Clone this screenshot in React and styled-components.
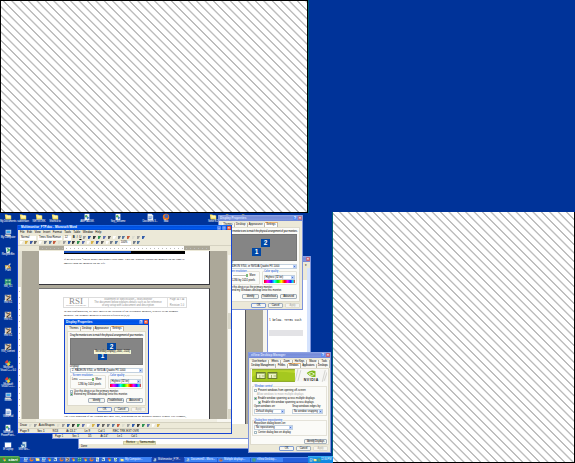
import React from "react";
import styled, { createGlobalStyle, css } from "styled-components";

const Global = createGlobalStyle`
  * { box-sizing: border-box; }
  body { margin: 0; overflow: hidden; background: #003399; }
`;

const sans = `"Liberation Sans", Arial, sans-serif`;
const serif = `"Liberation Serif", "Times New Roman", serif`;

const Screen = styled.main`
  position: relative;
  width: 575px;
  height: 463px;
  overflow: hidden;
  background: #003399;
  font: 2.6px/3px ${sans};
  color: #000;
  white-space: nowrap;
`;

const place = css`
  position: absolute;
  left: ${(p) => p.$x}px;
  top: ${(p) => p.$y}px;
  width: ${(p) => p.$w}px;
  height: ${(p) => p.$h}px;
`;

const Hatch = styled.div`
  ${place}
  background: repeating-linear-gradient(45deg,
    #fff 0 ${(p) => p.$phase - 1}px,
    #bdbdbd ${(p) => p.$phase - 0.4}px ${(p) => p.$phase + 0.4}px,
    #fff ${(p) => p.$phase + 1}px 5.94px);
  border: solid #000;
  border-width: ${(p) => p.$edges};
  box-shadow: ${(p) => p.$shadow};
`;

const Win = styled.section`
  ${place}
  display: flex;
  flex-direction: column;
  overflow: hidden;
  background: ${(p) => p.$bg || "#ece9d8"};
  border: 1px solid ${(p) => (p.$active ? "#1745d2" : "#8095dc")};
  border-top: 0;
`;

const Title = styled.header`
  flex: none;
  display: flex;
  align-items: center;
  height: ${(p) => p.$h || 6}px;
  margin: 0 -1px;
  padding: 0 1px 0 ${(p) => p.$pad ?? 2}px;
  gap: 1px;
  background: ${(p) =>
    p.$active
      ? "linear-gradient(#2878f5, #0050df 30%, #005af0 75%, #0042c4)"
      : "linear-gradient(#95a9e6, #768bd8 35%, #7f96df 80%, #6d80cf)"};
  color: ${(p) => (p.$active ? "#fff" : "#dce5ff")};
  font: bold 3px/5px ${sans};
`;

const Spacer = styled.span`flex: 1;`;

const Cap = styled.i`
  width: 4px;
  height: 4px;
  border-radius: 1px;
  background: ${(p) => p.$c || "#5b8cf5"};
  color: #fff;
  font: bold 4px/4px ${sans};
  text-align: center;
`;

const Sheet = styled.div`
  flex: 1;
  min-height: 0;
  display: flex;
  flex-direction: column;
  margin: ${(p) => p.$m || "0 2px"};
  padding: ${(p) => p.$p || "0 3px"};
  background: #fbfbf8;
  border: 1px solid #dedbcd;
`;

const Tabs = styled.div`
  display: flex;
  align-items: flex-end;
  flex: none;
  height: ${(p) => p.$h || 5}px;
  margin-left: ${(p) => p.$x ?? 3}px;
  letter-spacing: ${(p) => p.$track || 0}px;
`;

const Tab = styled.span`
  height: 4px;
  padding: 0 1.2px;
  line-height: 4px;
  border-right: 1px solid #bcb9ac;
  background: #f8f7f2;
  ${(p) => p.$on && "height: 5px; background: #fff; border-top: 1px solid #f4b873;"}
  ${(p) => p.$grow && "flex: 1 0 auto; text-align: center; padding: 0;"}
`;

const Line = styled.p`
  margin: 0;
  flex: none;
  height: ${(p) => p.$h || 4}px;
  padding-left: ${(p) => p.$in || 0}px;
  display: flex;
  align-items: center;
  gap: 1px;
  color: ${(p) => p.$c || "#000"};
  letter-spacing: ${(p) => p.$track || 0}px;
`;

const Arrangement = styled.div`
  position: relative;
  height: 27px;
  flex: none;
  background: #858585;
  border: 1px solid #777;
`;

const Monitor = styled.b`
  ${place}
  background: #0047a5;
  color: #fff;
  font: bold 6.5px/8px ${sans};
  text-align: center;
`;

const Tip = styled.span`
  ${place}
  background: #f6f5d5;
  letter-spacing: -0.13px;
  line-height: 4px;
  text-align: center;
`;

const Select = styled.div`
  flex: none;
  display: flex;
  justify-content: space-between;
  align-items: center;
  height: 5px;
  width: ${(p) => p.$w || "auto"};
  padding-left: 1px;
  border: 1px solid #c3d1de;
  background: #fff;
  &::after {
    content: "";
    width: 3px;
    height: 3px;
    background: radial-gradient(#5477bb 25%, #b5ccfa 45%);
  }
`;

const Row = styled.div`
  display: flex;
  align-items: center;
  flex: none;
  justify-content: ${(p) => p.$j || "flex-start"};
  gap: ${(p) => p.$gap ?? 2}px;
  height: ${(p) => p.$h}px;
  padding: ${(p) => p.$p || 0};
`;

const Group = styled.div`
  flex: 1;
  height: 14px;
  padding: 1px 1px 0;
  border: 1px solid #e4e2d9;
  border-radius: 1px;
`;

const Legend = styled.b`
  display: block;
  width: max-content;
  height: 3px;
  margin-top: -3px;
  padding: 0 0.5px;
  background: #fbfbf8;
  color: #0046d5;
  font-weight: normal;
`;

const Slider = styled.i`
  width: 15px;
  height: 3px;
  border-right: 2px solid #7cba7c;
  background: linear-gradient(#fff 1px, #bdbdb5 1px 2px, #fff 2px);
`;

const Spectrum = styled.div`
  height: 3px;
  background: linear-gradient(90deg, red, #f0f 12%, #22f 24%, #0ff 34%, #0e0 45%, #ff0 56%, red 67%, #f0f 76%, #22f 86%, #0ee 93%, #f22);
`;

const Check = styled.i`
  width: 3px;
  height: 3px;
  border: 1px solid #a5b9c2;
  background: ${(p) => (p.$on ? "#38a838" : "#fff")};
`;

const Button = styled.span`
  width: ${(p) => p.$w || 17}px;
  height: 5px;
  border: 1px solid ${(p) => (p.$off ? "#dddbd0" : p.$focus ? "#7f9bd0" : "#a5b1bc")};
  border-radius: 1px;
  background: #f6f5f0;
  color: ${(p) => (p.$off ? "#aaa99c" : "#000")};
  text-align: center;
  letter-spacing: -0.1px;
  line-height: 3px;
`;

function DisplayProperties({ x, y, active }) {
  return (
    <Win $x={x} $y={y} $w={85} $h={95} $active={active}>
      <Title $active={active}>Display Properties<Spacer /><Cap>?</Cap><Cap $c={active ? "#eb5430" : "#c06e86"}>×</Cap></Title>
      <Tabs $h={6}>
        <Tab>Themes</Tab><Tab>Desktop</Tab><Tab>Appearance</Tab><Tab $on>Settings</Tab>
      </Tabs>
      <Sheet $p="0 2px">
        <Line $h={6} $track={-0.18}>Drag the monitor icons to match the physical arrangement of your monitors.</Line>
        <Arrangement>
          <Monitor $x={36} $y={4} $w={9} $h={8}>2</Monitor>
          <Monitor $x={27} $y={13} $w={9} $h={8}>1</Monitor>
          {active && <Tip $x={23} $y={11} $w={37} $h={4}>Secondary Display (-1600, -1024)</Tip>}
        </Arrangement>
        <Line $h={3}>Display:</Line>
        <Select>2. RADEON 9700, or NVIDIA Quadro FX 1000</Select>
        <Row $h={16} $p="2px 0 0">
          <Group>
            <Legend>Screen resolution</Legend>
            <Row $h={4} $gap={1.5}>Less<Slider />More</Row>
            <Line $in={6} $h={6}>1280 by 1024 pixels</Line>
          </Group>
          <Group>
            <Legend>Color quality</Legend>
            <Row $h={2} />
            <Select>Highest (32 bit)</Select>
            <Spectrum />
          </Group>
        </Row>
        <Line $h={4}><Check />Use this device as the primary monitor.</Line>
        <Line $h={3}><Check $on />Extend my Windows desktop onto this monitor.</Line>
        <Row $h={7} $j="flex-end" $p="2px 0 0"><Button>Identify</Button><Button>Troubleshoot...</Button><Button>Advanced</Button></Row>
      </Sheet>
      <Row $h={7} $j="flex-end" $p="0 2px"><Button $w={15} $focus>OK</Button><Button $w={15}>Cancel</Button><Button $w={15} $off>Apply</Button></Row>
    </Win>
  );
}

const MenuBar = styled.div`
  flex: none;
  display: flex;
  align-items: center;
  gap: ${(p) => p.$gap || 2.4}px;
  height: ${(p) => p.$h || 5}px;
  padding: 0 2px;
  background: #ece9d8;
  font-size: 2.9px;
  border-bottom: ${(p) => (p.$line ? "1px solid #d5d2c1" : "0")};
`;

const Tool = styled.i`
  width: 3px;
  height: 3px;
  background: linear-gradient(120deg, ${(p) => p.$c} 55%, #ece9d8 75%);
`;

const toolColors = ["#fff", "#d7b34b", "#405ca5", "#646464", "#fff", "#747d89", "#5878a0", "#c65b3e", "#dcdccf", "#9b9b9b", "#325dab", "#3a3a3a", "#2d9151", "#6272ae"];
const Tools = ({ n, from = 0 }) => Array.from({ length: n }, (_, i) => <Tool key={i} $c={toolColors[(i + from) % toolColors.length]} />);

const Field = styled.span`
  width: ${(p) => p.$w}px;
  height: 4px;
  background: #fff;
  font-size: 2.6px;
  line-height: 4px;
  padding-left: 1px;
`;

const DocArea = styled.div`
  flex: 1;
  display: flex;
  min-height: 0;
`;

const VRuler = styled.div`
  width: 4px;
  background: repeating-linear-gradient(#fff 0 4px, #bbb 4px 5px, #fff 5px 6px) 1px 0 / 1px 100% no-repeat, #fbfaf5;
  border-right: 1px solid #d5d2c1;
  border-top: 36px solid #e3e1d3;
`;

const Canvas = styled.div`
  flex: 1;
  padding: 0 17px;
  background: #aca899;
`;

const Page = styled.article`
  height: ${(p) => p.$h}px;
  margin-bottom: 3px;
  padding: ${(p) => p.$top || 0}px 0 0 25px;
  background: #fff;
  border-right: 1px solid #36363c;
  border-bottom: 1px solid #36363c;
  border-top: ${(p) => (p.$first ? 0 : "1px solid #777")};
  font: 2.9px/4px ${serif};
  overflow: hidden;
`;

const Figure = styled.div`
  width: 121px;
  height: 3px;
  margin-bottom: 3px;
  background: linear-gradient(90deg, #164db8 67px, #000 67px);
  border-bottom: 1px solid #000;
`;

const Letterhead = styled.div`
  display: grid;
  grid-template-columns: 25px 79px 19px;
  height: 11px;
  width: 124px;
  margin: 0 0 1px -1px;
  border: 1px solid #dcdcdc;
  color: #8c8c8c;
  text-align: center;
  overflow: hidden;
  & > * { border-right: 1px solid #e2e2e2; }
`;

const Logo = styled.b`
  font: 9px/7px ${serif};
  color: #8c8c8c;
  small { display: block; font: 2.5px/2px ${serif}; letter-spacing: -0.1px; }
`;

const HeadText = styled.span`
  font: 2.6px/3px ${sans};
`;

const ScrollV = styled.div`
  width: 4px;
  background: linear-gradient(#ece9d8 4px, #f7f6f0 4px 62px, #dad8ca 62px 78px, #f7f6f0 78px 158px, #d9d6c6 158px);
  border-left: 1px solid #e0ddce;
`;

const Ruler = styled.div`
  flex: none;
  height: 5px;
  margin: 0 21px;
  background: repeating-linear-gradient(90deg, transparent 0 3px, #bbb 3px 4px) 0 2px / 100% 1px no-repeat,
    linear-gradient(90deg, #aca899 25px, #fff 25px 145px, #aca899 145px);
  border-bottom: 1px solid #ece9d8;
`;

const HScroll = styled.div`
  flex: none;
  height: 4px;
  background: linear-gradient(90deg, #ece9d8 18px, #f0eee2 18px 199px, #f8f7f1 199px);
  border-bottom: 1px solid #d5d2c1;
`;

const Gap = styled.div`height: ${(p) => p.$h}px;`;

function WordWindow() {
  return (
    <Win $x={17} $y={225} $w={215} $h={209} $active>
      <Title $active $h={5} $pad={4}>Multimonitor_FTP.doc - Microsoft Word<Spacer /><Cap>-</Cap><Cap>▫</Cap><Cap $c="#eb5430">×</Cap></Title>
      <MenuBar>{"File Edit View Insert Format Tools Table Window Help".split(" ").map((m) => <span key={m}>{m}</span>)}</MenuBar>
      <MenuBar $gap={1.9}><Field $w={16}>Normal</Field><Field $w={24}>Times New Roman</Field><Field $w={7}>12</Field><b>B</b><i>I</i><u>U</u><Tools n={5} from={9} /><Tools n={8} from={3} /></MenuBar>
      <MenuBar $gap={1.75} $line $h={6}><Tools n={21} /><Field $w={11}>100%</Field><Tools n={2} from={5} /></MenuBar>
      <Ruler />
      <DocArea>
        <VRuler />
        <Canvas>
          <Page $h={34} $first>
            <Figure />
            <div>If needed click “check point” and gather error right. This one window toward the monitor on the right is</div>
            <div>smaller than the monitor on the left.</div>
          </Page>
          <Page $h={150} $top={8}>
            <Letterhead>
              <Logo>RSI<small>Resource Systems Inc</small></Logo>
              <HeadText><div>Statement of Specification – Multi-Monitor</div><div>The document below explains details such as for reference</div><div>of any setup with a document and description</div></HeadText>
              <HeadText><div>Page <b>11 / 15</b></div><div>&nbsp;</div><div>Revision 1.0</div></HeadText>
            </Letterhead>
            <div>In this configuration, we have moved the location of the secondary monitor, relative to the primary</div>
            <div>monitor. The primary monitor is always referred as (0,0).</div>
            <Gap $h={97} />
            <div>The exact handling of the cloning mec may vary, depending on the graphics adapter vendor. For example,</div>
            <div>in the behaviour presented, the nVidia display adapter allows you to control whether or not an</div>
          </Page>
        </Canvas>
        <ScrollV />
      </DocArea>
      <HScroll />
      <MenuBar $gap={2} $line $h={6}><span>Draw</span><Tools n={2} from={8} /><span>AutoShapes</span><Tools n={10} from={8} /><Tools n={11} from={5} /></MenuBar>
      <MenuBar $h={4} $gap={8}><span>Page 9</span><span>Sec 1</span><span>9/13</span><span>At 13.1"</span><span>Ln 9</span><span>Col 1</span><span>REC TRK EXT OVR</span></MenuBar>
    </Win>
  );
}

const Strip = styled.div`
  ${place}
  background: ${(p) => p.$bg};
`;

const StatusWindow = styled.div`
  ${place}
  background: ${(p) => p.$bg || "#ece9d8"};
  border: solid #7b91d8;
  border-width: 0 0 1px 1px;
  display: flex;
  align-items: flex-end;
  gap: 9px;
  padding-left: 2px;
`;

const Mini = styled.span`
  ${place}
  background: #ece8ba;
  border: 1px solid #cfcca8;
  line-height: 2px;
  text-align: center;
`;

const BrowserBody = styled.div`
  flex: 1;
  padding: 50px 0 0 38px;
  border-right: 3px solid #d5e3fd;
  background: linear-gradient(#ece9d8 12px, #fff 12px);
  font: 2.85px/5px "Liberation Mono", monospace;
`;

const GreyField = styled.div`
  height: 6px;
  width: 34px;
  margin-top: 7px;
  background: #e3e3e6;
`;

const Banner = styled.div`
  display: flex;
  flex: none;
  height: 13px;
  background: #fff;
  svg { display: block; }
`;

const Fieldset = styled.div`
  flex: none;
  height: ${(p) => p.$h}px;
  margin-top: 4px;
  padding: 1px 1px 0;
  border: 1px solid #e4e2d9;
`;

function NvidiaWindow() {
  return (
    <Win $x={248} $y={352} $w={83} $h={101}>
      <Title $pad={3}>nView Desktop Manager<Spacer /><Cap>?</Cap><Cap $c="#c45f73">×</Cap></Title>
      <Row $h={1.5} />
      <Tabs $x={1} $track={-0.15} $h={4}>{["User Interface", "Effects", "Zoom", "Hot Keys", "Mouse", "Tools"].map((t) => <Tab $grow key={t}>{t}</Tab>)}</Tabs>
      <Tabs $x={1} $track={-0.15} $h={4.5}>{["Desktop Management", "Profiles", "Windows", "Applications", "Desktops"].map((t) => <Tab $grow key={t} $on={t === "Windows"}>{t}</Tab>)}</Tabs>
      <Sheet $p="0 1px" $m="0 1px">
        <Banner>
          <svg width="44" height="13" viewBox="0 0 44 13">
            <path d="M0 0H44V13H0Z" fill="#b8d52b" /><path d="M0 8Q14 0 44 4V13H0Z" fill="#a5c81f" /><path d="M0 .5H44M0 12.5H44" stroke="#8aa52b" />
            <rect x="4.5" y="3.5" width="9" height="6" fill="#f3f7cd" stroke="#61732d" /><rect x="16.5" y="3.5" width="9" height="6" fill="#f3f7cd" stroke="#61732d" />
            <path d="M5 4.5H13M17 4.5H25M8 6V9M20 6V9M10 7H13M22 7H25" stroke="#8ca649" strokeWidth=".8" />
          </svg>
          <svg width="33" height="13" viewBox="0 0 33 13">
            <path d="M0 0H33V13H0Z" fill="#f6f6f4" /><path d="M3 0L0 12M31 1L28 13M6 1L3 12M33 3L30 12" stroke="#d2d2ce" />
            <path d="M12 4Q16 0 21 2V8Q16 9 12 4Z" fill="#80b818" /><path d="M14 4.5Q17 2 20 5Q17 8 14 4.5" fill="none" stroke="#fff" strokeWidth=".8" />
            <text x="9" y="12" fontFamily="Liberation Sans" fontSize="3.6" fontWeight="bold" textLength="15" fill="#222">NVIDIA</text>
          </svg>
        </Banner>
        <Fieldset $h={30}>
          <Legend>Window control</Legend>
          <Line $h={4}><Check />Prevent windows from opening off-screen</Line>
          <Line $h={4} $in={3} $c="#aaa">Allow windows to move multiple displays</Line>
          <Line $h={4}><Check $on />Enable window spanning across multiple displays</Line>
          <Line $h={4} $in={4}><Check $on />Enable title window spanning across displays</Line>
          <Row $h={5} $gap={17}><span>Open windows on:</span><span>Snap windows edges by:</span></Row>
          <Row $h={5} $gap={7}><Select $w="31px">Default display</Select><Select $w="31px">No window snapping</Select></Row>
        </Fieldset>
        <Fieldset $h={16}>
          <Legend>Dialog box repositioning</Legend>
          <Line $h={3}>Reposition dialog boxes on:</Line>
          <Select $w="39px">No repositioning</Select>
          <Line $h={5}><Check />Center dialog box on display</Line>
        </Fieldset>
        <Row $h={8} $j="flex-end" $p="2px 0 0"><Button $w={23}>Identify Displays</Button></Row>
      </Sheet>
      <Row $h={7} $j="flex-end" $p="0 2px"><Button $w={15} $focus>OK</Button><Button $w={15}>Cancel</Button><Button $w={15} $off>Apply</Button></Row>
    </Win>
  );
}

const art = {
  folder: <><path d="M1 2H4L5 3H9V8H2Z" fill="#f6df65" /><path d="M3 3H8V6H3Z" fill="#fff6b0" /></>,
  pc: <><path d="M2 1H9V6H2Z" fill="#ccd8e6" /><path d="M3 2H8V5H3Z" fill="#3ba5e9" /><path d="M1 7H8L9 9H2Z" fill="#ded9c8" /></>,
  bin: <><path d="M2 2H8L7 9H3Z" fill="#dcebe9" /><path d="M4 3L7 5L4 7" fill="none" stroke="#28a15b" strokeWidth="1.5" /></>,
  brush: <><path d="M1 4H7L9 8H2Z" fill="#e7c450" /><path d="M2 8L8 2" stroke="#ddd" strokeWidth="1.6" /><path d="M5 4L7 7" stroke="#b14520" /></>,
  green: <><path d="M1 1H9V9H1Z" fill="#339b72" /><path d="M2 3H8M3 7H8" stroke="#c4ebcc" /><path d="M5 1V9" stroke="#185c85" /></>,
  pen: <><path d="M1 1H9V9H1Z" fill="#d5d1c7" /><path d="M2 2L8 4L3 8L9 8" fill="none" stroke="#353333" strokeWidth="1.2" /><path d="M3 7L8 1" stroke="#cf7e2f" /></>,
  color: <><path d="M1 4L4 1L6 4L3 6Z" fill="#e14135" /><path d="M6 2L9 4L6 6Z" fill="#4bad4b" /><path d="M3 6L6 4L8 7L5 9Z" fill="#f2cf36" /><path d="M1 6L4 5L4 8Z" fill="#449ce3" /></>,
  doc: <><path d="M2 1H7L9 3V9H2Z" fill="#e7edf5" /><path d="M3 5H8M3 7H7" stroke="#4b78c2" /></>,
  word: <><path d="M3 1H8V8H3Z" fill="#c5dce6" /><path d="M1 4H6V9H1Z" fill="#3b78ae" /><path d="M2 5L3 8L4 6L5 8" stroke="#fff" fill="none" /></>,
  media: <><path d="M2 1H8V9H2Z" fill="#eff1f2" /><circle cx="4" cy="4" r="1.5" fill="#51ad5c" /><path d="M5 4L8 6L5 8Z" fill="#3b82d4" /></>,
  fire: <><circle cx="5" cy="5" r="4" fill="#e97624" /><circle cx="5.5" cy="4" r="2.3" fill="#4567bb" /></>,
  screen: <><path d="M1 2H9V8H1Z" fill="#fff" /><path d="M1 2H9" stroke="#76aae0" /></>,
};

const Shortcut = styled.div`
  ${place}
  display: flex;
  flex-direction: column;
  align-items: center;
  color: #fff;
  font: 2.7px/2.8px ${sans};
  letter-spacing: -0.14px;
  text-align: center;
  white-space: pre;
  svg { flex: none; width: 8px; height: 8px; }
`;

const shortcuts = [
  ["folder", "My Documents"], ["pc", "My Computer"], ["bin", "Recycle Bin"], ["brush", "Paint"], ["green", "SSI_3.1"],
  ["pen", "RSI 5.1"], ["pen", "RSI 5.1"], ["pen", "RSI 5.1"], ["pen", "RSI_Current"], ["color", "Microsoft\nVisual C++ 6.0"],
  ["color", "Microsoft\nVisual C++..."], ["pc", "Mobile"], ["doc", "WordPad"], ["media", "Microsoft\nPowerPoint..."], ["screen", "IE Laptop"],
].map(([k, t], i) => [k, t, 8, 213 + i * 16.25]).concat([
  ["folder", "subversion", 23, 213], ["folder", "NETWORK", 39, 213], ["folder", "Shortcut to", 55, 213], ["media", "AMFTA.LNK", 87, 213],
  ["media", "Sep_oct.wmv", 118, 213], ["doc", "Document 3...", 150, 213], ["fire", "Max", 166, 213], ["folder", "Steve 8.2", 213, 213],
  ["folder", "", 229, 213], ["folder", "", 245, 213], ["word", "MW files...", 24, 440.5],
]);

const Taskbar = styled.footer`
  ${place}
  display: flex;
  align-items: center;
  background: linear-gradient(#73a3f7, #245fdc 20%, #245fdc 80%, #1941a5);
  color: #fff;
  font: 2.6px/4px ${sans};
`;

const Start = styled.b`
  flex: none;
  width: 20px;
  height: 7px;
  padding-left: 2px;
  border-radius: 0 2px 2px 0;
  background: linear-gradient(#6dbb68, #36913a 30%, #36893a);
  font: italic bold 4.4px/7px ${sans};
  svg { width: 5px; height: 5px; vertical-align: -1px; }
`;

const Quick = styled.span`
  flex: none;
  display: flex;
  gap: 1px;
  width: 99px;
  padding-left: 3px;
  svg { width: 5px; height: 5px; }
`;

const Task = styled.span`
  flex: none;
  display: flex;
  align-items: center;
  gap: 1px;
  width: 32px;
  height: 5px;
  margin-right: 1px;
  padding-left: 1px;
  overflow: hidden;
  background: ${(p) => (p.$on ? "#183fa8" : "#3d83f5")};
  svg { width: 4px; height: 4px; }
`;

const Tray = styled.span`
  flex: none;
  width: 25px;
  height: 7px;
  padding-left: 1px;
  display: flex;
  align-items: center;
  letter-spacing: -0.1px;
  background: linear-gradient(#47b8f5, #1290e9 25%, #0f86df);
  svg { width: 4px; height: 4px; }
`;

const Icon = ({ kind }) => <svg viewBox="0 0 10 10">{art[kind]}</svg>;

export default function App() {
  return (
    <Screen>
      <Global />
      <Hatch $x={0} $y={0} $w={308} $h={213} $phase={2.5} $edges="1px" $shadow="1px 0 #006176" />
      <Hatch $x={333} $y={212} $w={242} $h={251} $phase={3.4} $edges="0 1px 1px 0" $shadow="-1px 0 #006176" />

      {shortcuts.map(([kind, label, x, y], i) => (
        <Shortcut key={i} $x={x - 8} $y={y} $w={16} $h={14}><Icon kind={kind} />{label}</Shortcut>
      ))}

      <Win $x={230} $y={256} $w={81} $h={182}>
        <Title><Spacer /><Cap $c="#c45f73">×</Cap></Title>
        <Row $h={6} $j="flex-end" $p="0 3px">▾</Row>
        <BrowserBody>l below. Terms such<GreyField /></BrowserBody>
      </Win>
      <StatusWindow $x={78} $y={430} $w={173} $h={19} $bg="linear-gradient(#fff 14px, #ece9d8 14px)"><span>Done</span></StatusWindow>
      <Mini $x={123} $y={441} $w={15} $h={4}>Etvrtice</Mini>
      <Mini $x={138} $y={441} $w={18} $h={4}>Yanma mode</Mini>
      <StatusWindow $x={52} $y={424} $w={199} $h={15}><span>Page 1</span><span>Sec 1</span><span>1/5</span><span>At 2.4"</span><span>Ln 1</span><span>Col 1</span></StatusWindow>
      <Strip $x={230} $y={308} $w={15} $h={116} $bg="#fff" />
      <Strip $x={245} $y={308} $w={18} $h={116} $bg="linear-gradient(90deg, #55555c 1px, #aca899 1px)" />
      <Strip $x={263} $y={308} $w={5} $h={130} $bg="linear-gradient(90deg, #f6f5ee 4px, #8397db 4px)" />

      <DisplayProperties x={218} y={215} />
      <WordWindow />
      <DisplayProperties x={64} y={319} active />
      <NvidiaWindow />

      <Taskbar $x={0} $y={456.5} $w={333} $h={6.5}>
        <Start><Icon kind="color" /> start</Start>
        <Quick>{["pc", "fire", "folder", "pc", "color", "word", "fire", "pen", "color", "green", "color", "fire", "media", "word", "color", "bin"].map((k, i) => <Icon key={i} kind={k} />)}</Quick>
        <Task><Icon kind="folder" />My Computer...</Task>
        <Task $on><Icon kind="word" />Multimonitor_FTP...</Task>
        <Task><Icon kind="word" />Document3 - Micro...</Task>
        <Task><Icon kind="fire" />Multiple displays...</Task>
        <Task><Icon kind="green" />nView Desktop...</Task>
        <Spacer />
        <Tray><Icon kind="pc" /><Icon kind="folder" /><Icon kind="green" />12:34 PM</Tray>
      </Taskbar>
    </Screen>
  );
}
